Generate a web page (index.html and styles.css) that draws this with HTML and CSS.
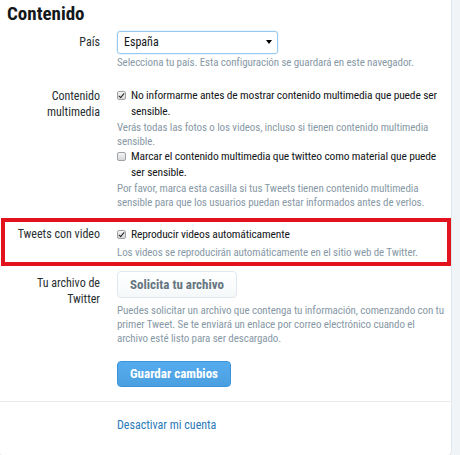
FILE: index.html
```html
<!DOCTYPE html>
<html lang="es">
<head>
    <meta charset="UTF-8">
    <title>Contenido</title>
    <link rel="stylesheet" href="styles.css">
</head>
<body>
    <div class="settings_card">
        <div class="settings_body">
            <h2 class="settings_title">Contenido</h2>

            <div class="setting_row row_country">
                <div class="setting_label">País</div>
                <div class="setting_control">
                    <div class="select_box">
                        <span>España</span>
                        <span class="select_arrow"></span>
                    </div>
                    <p class="help_text help_country">Selecciona tu país. Esta configuración se guardará en este navegador.</p>
                </div>
            </div>

            <div class="setting_row row_media">
                <div class="setting_label">Contenido multimedia</div>
                <div class="setting_control">
                    <div class="check_item">
                        <span class="check_box checked"></span>
                        <span class="check_text">No informarme antes de mostrar contenido multimedia que puede ser sensible.</span>
                    </div>
                    <p class="help_text help_check">Verás todas las fotos o los videos, incluso si tienen contenido multimedia sensible.</p>
                    <div class="check_item">
                        <span class="check_box"></span>
                        <span class="check_text">Marcar el contenido multimedia que twitteo como material que puede ser sensible.</span>
                    </div>
                    <p class="help_text help_check">Por favor, marca esta casilla si tus Tweets tienen contenido multimedia sensible para que los usuarios puedan estar informados antes de verlos.</p>
                </div>
            </div>

            <div class="setting_row row_video">
                <div class="setting_label">Tweets con video</div>
                <div class="setting_control">
                    <div class="check_item">
                        <span class="check_box checked"></span>
                        <span class="check_text">Reproducir videos automáticamente</span>
                    </div>
                    <p class="help_text help_video">Los videos se reproducirán automáticamente en el sitio web de Twitter.</p>
                </div>
            </div>

            <div class="setting_row row_archive">
                <div class="setting_label label_archive">Tu archivo de Twitter</div>
                <div class="setting_control">
                    <button class="btn btn_plain">Solicita tu archivo</button>
                    <p class="help_text help_archive">Puedes solicitar un archivo que contenga tu información, comenzando con tu primer Tweet. Se te enviará un enlace por correo electrónico cuando el archivo esté listo para ser descargado.</p>
                </div>
            </div>

            <div class="setting_row row_save">
                <div class="setting_label"></div>
                <div class="setting_control">
                    <button class="btn btn_primary">Guardar cambios</button>
                </div>
            </div>
        </div>

        <div class="settings_footer">
            <a class="footer_link" href="#">Desactivar mi cuenta</a>
        </div>
    </div>
</body>
</html>
```

FILE: styles.css
```css
body {
    margin: 0;
    background: #f0f4f7;
    font-family: Roboto, "Liberation Sans", Arial, sans-serif;
    font-stretch: 75%;
    color: #292f33;
}

.settings_card {
    width: 452px;
    margin-left: -2px;
    background: #fff;
    border: 1px solid #e1e8ed;
    border-top: none;
    border-radius: 0 0 5px 5px;
}

.settings_body {
    padding: 3px 0 14px 8px;
}

.settings_title {
    margin: 0;
    font-size: 19px;
    line-height: 22px;
    font-weight: bold;
    color: #14171a;
}

.setting_row {
    display: grid;
    grid-template-columns: 93px 330px;
    column-gap: 17px;
}

.setting_label {
    text-align: right;
    font-size: 12px;
    line-height: 15.5px;
    color: #292f33;
}

.row_country {
    margin-top: 6px;
}

.row_country .setting_label {
    padding-top: 4px;
}

.row_media {
    margin-top: 18px;
}

.row_media .setting_label {
    padding-top: 1px;
}

.row_video {
    position: relative;
    margin-top: 17px;
}

/* red annotation frame */
.row_video::after {
    content: "";
    position: absolute;
    left: -6px;
    top: -9px;
    width: 450px;
    height: 48px;
    border: 4px solid #e3131e;
    box-sizing: border-box;
}

.row_archive {
    margin-top: 11px;
}

.label_archive {
    padding-top: 4px;
    line-height: 16px;
}

.row_save {
    margin-top: 15px;
}

.select_box {
    position: relative;
    width: 161px;
    height: 23px;
    box-sizing: border-box;
    border: 1px solid #99c9ee;
    border-radius: 3px;
    box-shadow: 0 0 2px rgba(85, 172, 238, 0.4);
    padding-left: 6px;
    font-size: 12px;
    line-height: 21px;
    color: #14171a;
}

.select_arrow {
    position: absolute;
    right: 5px;
    top: 8px;
    border-left: 3px solid transparent;
    border-right: 3px solid transparent;
    border-top: 4px solid #000;
}

.help_text {
    margin: 0;
    font-size: 11px;
    line-height: 14px;
    letter-spacing: -0.1px;
    color: #8899a6;
}

.help_country {
    margin-top: 2px;
}

.help_check {
    margin-top: 2px;
}

.help_video {
    margin-top: 3px;
}

.help_archive {
    margin-top: 6px;
}

.check_item {
    display: flex;
    align-items: flex-start;
    font-size: 11.5px;
    line-height: 15.5px;
    letter-spacing: -0.15px;
    color: #14171a;
}

.check_box {
    flex-shrink: 0;
    width: 9px;
    height: 9px;
    margin: 3px 5px 0 0;
    box-sizing: border-box;
    border: 1px solid #9ea3a8;
    border-radius: 2px;
    background: linear-gradient(#f4f4f4, #d8d8d8);
    position: relative;
}

.check_box.checked::after {
    content: "";
    position: absolute;
    left: 2px;
    top: 0px;
    width: 2px;
    height: 5px;
    border-right: 1.5px solid #222;
    border-bottom: 1.5px solid #222;
    transform: rotate(40deg);
}

.btn {
    font-family: Roboto, "Liberation Sans", Arial, sans-serif;
    font-stretch: 75%;
    font-size: 13px;
    font-weight: bold;
    border-radius: 4px;
    cursor: pointer;
}

.btn_plain {
    height: 27px;
    padding: 0 12px;
    color: #66757f;
    background: linear-gradient(#fff, #f5f8fa);
    border: 1px solid #e1e8ed;
}

.btn_primary {
    height: 26px;
    padding: 0 12px;
    color: #fff;
    background: linear-gradient(#55acee, #4a9fe0);
    border: 1px solid #3b94d9;
}

.settings_footer {
    border-top: 1px solid #e6ecf0;
    padding: 12px 0 22px 118px;
}

.footer_link {
    font-size: 12px;
    line-height: 15.5px;
    color: #2b7bb9;
    text-decoration: none;
}
```
